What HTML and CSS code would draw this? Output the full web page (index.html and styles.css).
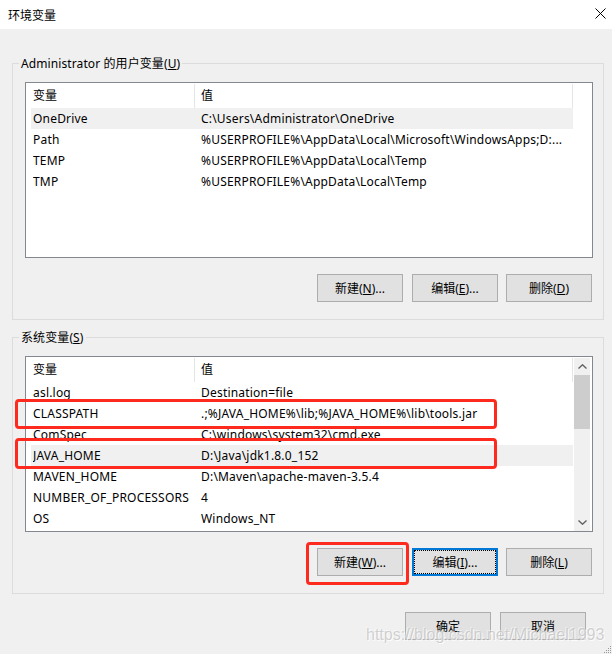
FILE: index.html
```html
<!DOCTYPE html>
<html lang="zh-CN">
<head>
<meta charset="utf-8">
<title>环境变量</title>
<link rel="stylesheet" href="styles.css">
</head>
<body>
<div class="titlebar">
  <span class="title">环境变量</span>
  <svg class="close" width="11" height="11" viewBox="0 0 11 11"><path d="M0.5 0.5L10.5 10.5M10.5 0.5L0.5 10.5" stroke="#000" stroke-width="1" fill="none"/></svg>
</div>
<div class="main">
  <fieldset class="group">
    <legend>Administrator 的用户变量(<u>U</u>)</legend>
    <div class="list">
      <div class="list-main">
        <div class="list-head"><div class="hcell c1">变量</div><div class="hcell c2">值</div></div>
        <div class="row sel"><span>OneDrive</span><span>C:\Users\Administrator\OneDrive</span></div>
        <div class="row"><span>Path</span><span>%USERPROFILE%\AppData\Local\Microsoft\WindowsApps;D:...</span></div>
        <div class="row"><span>TEMP</span><span>%USERPROFILE%\AppData\Local\Temp</span></div>
        <div class="row"><span>TMP</span><span>%USERPROFILE%\AppData\Local\Temp</span></div>
      </div>
    </div>
    <div class="btns">
      <div class="btn">新建(<u>N</u>)...</div>
      <div class="btn">编辑(<u>E</u>)...</div>
      <div class="btn">删除(<u>D</u>)</div>
    </div>
  </fieldset>
  <fieldset class="group">
    <legend>系统变量(<u>S</u>)</legend>
    <div class="list">
      <div class="list-main">
        <div class="list-head"><div class="hcell c1">变量</div><div class="hcell c2">值</div></div>
        <div class="row"><span>asl.log</span><span>Destination=file</span></div>
        <div class="row"><span>CLASSPATH</span><span>.;%JAVA_HOME%\lib;%JAVA_HOME%\lib\tools.jar</span></div>
        <div class="row"><span>ComSpec</span><span>C:\windows\system32\cmd.exe</span></div>
        <div class="row sel"><span>JAVA_HOME</span><span>D:\Java\jdk1.8.0_152</span></div>
        <div class="row"><span>MAVEN_HOME</span><span>D:\Maven\apache-maven-3.5.4</span></div>
        <div class="row"><span>NUMBER_OF_PROCESSORS</span><span>4</span></div>
        <div class="row"><span>OS</span><span>Windows_NT</span></div>
      </div>
      <div class="scroll">
        <div class="sb-btn"><svg width="9" height="5" viewBox="0 0 9 5"><path d="M0.5 4.5L4.5 0.8L8.5 4.5" stroke="#606060" stroke-width="1.4" fill="none"/></svg></div>
        <div class="sb-thumb"></div>
        <div class="sb-track"></div>
        <div class="sb-btn"><svg width="9" height="5" viewBox="0 0 9 5"><path d="M0.5 0.5L4.5 4.2L8.5 0.5" stroke="#606060" stroke-width="1.4" fill="none"/></svg></div>
      </div>
    </div>
    <div class="btns">
      <div class="btn">新建(<u>W</u>)...</div>
      <div class="btn focus">编辑(<u>I</u>)...</div>
      <div class="btn">删除(<u>L</u>)</div>
    </div>
  </fieldset>
  <div class="dlg-btns">
    <div class="btn">确定</div>
    <div class="btn">取消</div>
  </div>
</div>
<div class="mark mark1"></div>
<div class="mark mark2"></div>
<div class="mark mark3"></div>
<div class="watermark">https://blog.csdn.net/Michael1993</div>
<svg class="grip" width="9" height="9" viewBox="0 0 9 9">
  <rect x="7" y="1" width="1" height="1" fill="#9a9a9a"/>
  <rect x="5" y="3" width="1" height="1" fill="#9a9a9a"/>
  <rect x="7" y="3" width="1" height="1" fill="#9a9a9a"/>
  <rect x="3" y="5" width="1" height="1" fill="#9a9a9a"/>
  <rect x="5" y="5" width="1" height="1" fill="#9a9a9a"/>
  <rect x="7" y="5" width="1" height="1" fill="#9a9a9a"/>
  <rect x="1" y="7" width="1" height="1" fill="#9a9a9a"/>
  <rect x="3" y="7" width="1" height="1" fill="#9a9a9a"/>
  <rect x="5" y="7" width="1" height="1" fill="#9a9a9a"/>
  <rect x="7" y="7" width="1" height="1" fill="#9a9a9a"/>
</svg>
</body>
</html>
```
FILE: styles.css
```css
* { box-sizing: border-box; }
body {
  margin: 0;
  width: 612px;
  height: 654px;
  overflow: hidden;
  position: relative;
  background: #f0f0f0;
  font-family: "Noto Sans", "Noto Sans CJK SC", sans-serif;
  font-size: 12px;
  color: #000;
}
.titlebar {
  height: 29px;
  background: #fff;
  display: flex;
  align-items: center;
  justify-content: space-between;
  padding: 0 6px 0 8px;
}
.title { font-family: "Noto Sans CJK SC", sans-serif; font-size: 12px; }
.close { display: block; margin-top: -2px; }
.main { padding: 26px 8px 0 12px; }
.group {
  margin: 0;
  min-width: 0;
  border: 1px solid #dcdcdc;
  padding: 10px 10px 17px 12px;
}
.group + .group { margin-top: 9px; }
legend {
  padding: 0 2px;
  margin-left: -6px;
  height: 17px;
  line-height: 17px;
  letter-spacing: 0.1px;
}
.list {
  height: 176px;
  border: 1px solid #828790;
  background: #fff;
  display: flex;
}
.list-main { width: 547px; overflow: hidden; }
.list-head { display: flex; height: 25px; }
.hcell {
  height: 24px;
  margin-top: 1px;
  line-height: 24px;
  border-right: 1px solid #e5e5e5;
  white-space: nowrap;
}
.hcell.c1 { width: 169px; padding-left: 7px; }
.hcell.c2 { width: 378px; padding-left: 6px; }
.row {
  display: grid;
  grid-template-columns: 168px 1fr;
  margin-left: 5px;
  padding-left: 2px;
  height: 21px;
  line-height: 21px;
  white-space: nowrap;
  letter-spacing: 0.2px;
}
.row span { overflow: hidden; }
.row.sel { background: #f0f0f0; }
.scroll {
  width: 16px;
  height: 173px;
  margin: 1px 1px 0 1px;
  background: #f0f0f0;
  display: flex;
  flex-direction: column;
}
.sb-btn { height: 17px; display: flex; align-items: center; justify-content: center; }
.sb-btn svg { display: block; }
.sb-thumb { height: 54px; background: #cdcdcd; }
.sb-track { flex: 1; }
.btns {
  display: flex;
  justify-content: flex-end;
  margin-top: 16px;
  padding-right: 1px;
}
.btns .btn:nth-child(1) { margin-right: 9px; }
.btns .btn:nth-child(2) { margin-right: 8px; }
.btn {
  width: 86px;
  height: 28px;
  border: 1px solid #adadad;
  background: #e1e1e1;
  display: flex;
  align-items: center;
  justify-content: center;
  white-space: nowrap;
}
.btn u { text-underline-offset: 1px; }
.btn.focus {
  position: relative;
  border: 2px solid #0078d7;
}
.btn.focus::after {
  content: "";
  position: absolute;
  inset: 0;
  border: 1px dotted #000;
}
.dlg-btns {
  display: flex;
  justify-content: flex-end;
  gap: 9px;
  margin-top: 18px;
  padding-right: 18px;
}
.mark {
  position: absolute;
  border: 3px solid #fe2a1e;
  border-radius: 4px;
}
.mark1 { left: 15px; top: 399px; width: 482px; height: 30px; }
.mark2 { left: 15px; top: 438px; width: 482px; height: 31px; }
.mark3 { left: 306px; top: 542px; width: 103px; height: 43px; }
.watermark {
  position: absolute;
  left: 366px;
  top: 627px;
  font-family: "Liberation Sans", Arial, sans-serif;
  font-size: 16px;
  line-height: 16px;
  color: rgba(190, 190, 190, 0.7);
  text-shadow: 1px 1px 0 rgba(255, 255, 255, 0.8), -1px -1px 0 rgba(255, 255, 255, 0.5);
  white-space: nowrap;
}
.grip { position: absolute; right: 0; bottom: 0; }
```
